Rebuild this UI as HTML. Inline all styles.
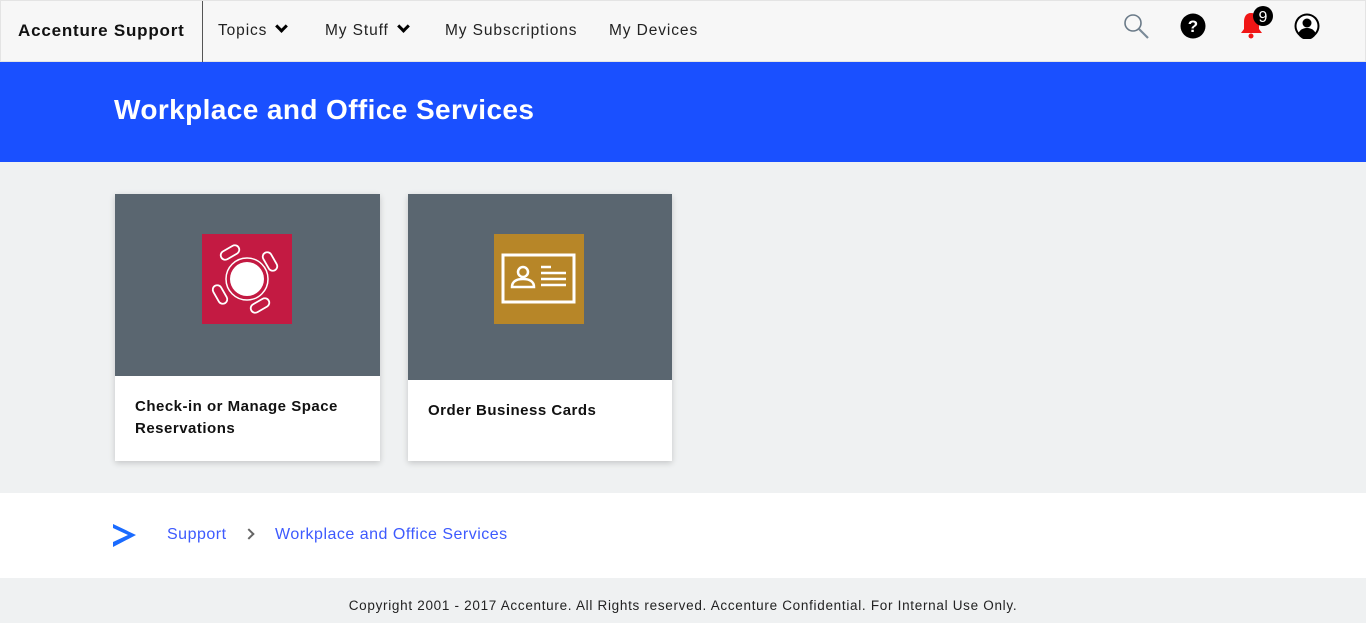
<!DOCTYPE html>
<html><head><meta charset="utf-8"><style>
*{margin:0;padding:0;box-sizing:border-box}
body{width:1366px;height:623px;overflow:hidden;font-family:"Liberation Sans",sans-serif;background:#eff1f2;position:relative}
.hdr{position:absolute;left:0;top:0;width:1366px;height:62px;background:#f7f7f7;border:1px solid #e4e4e4}
.brand{position:absolute;left:17px;top:20px;font-size:17px;font-weight:bold;color:#111;letter-spacing:0.8px}
.sep{position:absolute;left:201px;top:0;width:1px;height:61px;background:#555}
.nav{position:absolute;top:21px;font-size:15.5px;color:#222;letter-spacing:0.9px}
.chev{display:inline-block;width:9px;height:9px;border-right:3.5px solid #000;border-bottom:3.5px solid #000;transform:rotate(45deg);margin-left:10px;position:relative;top:-4px}
.band{position:absolute;left:0;top:62px;width:1366px;height:100px;background:#1a50ff}
.band h1{position:absolute;left:114px;top:32px;font-size:28px;color:#fff;font-weight:bold;letter-spacing:0.4px}
.card{position:absolute;top:194px;background:#fff;box-shadow:0 2px 6px rgba(0,0,0,.18)}
.card .g{background:#5a6670;position:relative}
.card .t{position:absolute;left:20px;font-size:15px;font-weight:bold;color:#111;line-height:22px;letter-spacing:0.5px}
.foot{position:absolute;left:0;top:493px;width:1366px;height:85px;background:#fff}
.bc{position:absolute;top:33px;font-size:16px;color:#3d5afe;letter-spacing:0.5px}
.copy{position:absolute;left:0;top:598px;width:1366px;text-align:center;font-size:13.5px;color:#222;letter-spacing:0.7px}
</style></head><body>
<div class="hdr">
<div class="brand">Accenture Support</div><div class="sep"></div>
<div class="nav" style="left:217px">Topics<span class="chev"></span></div>
<div class="nav" style="left:324px">My Stuff<span class="chev"></span></div>
<div class="nav" style="left:444px">My Subscriptions</div>
<div class="nav" style="left:608px">My Devices</div>
<svg style="position:absolute;left:1121px;top:11px" width="30" height="28"><circle cx="11" cy="11" r="8" fill="none" stroke="#6a7a88" stroke-width="1.6"/><line x1="17" y1="17" x2="26" y2="26" stroke="#7a8a98" stroke-width="2.2"/></svg>
<svg style="position:absolute;left:1179px;top:12px" width="26" height="26"><circle cx="13" cy="13" r="12.5" fill="#000"/><text x="13" y="19" font-size="17" font-weight="bold" fill="#fff" text-anchor="middle" font-family="Liberation Sans">?</text></svg>
<svg style="position:absolute;left:1236px;top:4px" width="40" height="36"><path d="M14 8c-5 0 -7 4-7 9v7l-3 4h21l-3-4v-7c0-5-3-9-8-9z" fill="#f01616"/><circle cx="14" cy="31" r="2.5" fill="#f01616"/><circle cx="26" cy="11" r="10" fill="#000"/><text x="26" y="17" font-size="16" fill="#fff" text-anchor="middle" font-family="Liberation Sans">9</text></svg>
<svg style="position:absolute;left:1293px;top:12px" width="26" height="26"><circle cx="13" cy="13" r="12.5" fill="#000"/><circle cx="13" cy="13" r="10.5" fill="#fff"/><circle cx="13" cy="10" r="4.5" fill="#000"/><path d="M4 21c2-5 6-6 9-6s7 1 9 6a10 10 0 0 1-18 0z" fill="#000"/></svg>
</div>
<div class="band"><h1>Workplace and Office Services</h1></div>
<div class="card" style="left:115px;width:265px;height:267px"><div class="g" style="height:182px">
<svg style="position:absolute;left:87px;top:40px" width="90" height="90"><rect width="90" height="90" fill="#c31a42"/><circle cx="45" cy="45" r="17" fill="#fff"/><circle cx="45" cy="45" r="21" fill="none" stroke="#fff" stroke-width="1.5"/><g fill="none" stroke="#fff" stroke-width="1.8"><rect x="18" y="14" width="20" height="9" rx="4.5" transform="rotate(-30 28 18.5)"/><rect x="58" y="23" width="20" height="9" rx="4.5" transform="rotate(60 68 27.5)"/><rect x="8" y="56" width="20" height="9" rx="4.5" transform="rotate(60 18 60.5)"/><rect x="48" y="67" width="20" height="9" rx="4.5" transform="rotate(-30 58 71.5)"/></g></svg>
</div><div class="t" style="top:202px">Check-in or Manage Space<br>Reservations</div></div>
<div class="card" style="left:408px;width:264px;height:267px"><div class="g" style="height:186px">
<svg style="position:absolute;left:86px;top:40px" width="90" height="90"><rect width="90" height="90" fill="#b78628"/><rect x="9" y="21" width="71" height="47" fill="none" stroke="#fff" stroke-width="3"/><circle cx="29" cy="38" r="5" fill="none" stroke="#fff" stroke-width="2.5"/><path d="M18 53c0-6 5-8 11-8s11 2 11 8z" fill="none" stroke="#fff" stroke-width="2.5"/><g stroke="#fff" stroke-width="2.5"><line x1="47" y1="33" x2="57" y2="33"/><line x1="47" y1="39" x2="72" y2="39"/><line x1="47" y1="45" x2="72" y2="45"/><line x1="47" y1="51" x2="72" y2="51"/></g></svg>
</div><div class="t" style="top:206px">Order Business Cards</div></div>
<div class="foot">
<svg style="position:absolute;left:112px;top:30px" width="26" height="26"><path d="M1 1L24 12L1 24L1 19L16 12L1 5z" fill="#1a6bff"/></svg>
<div class="bc" style="left:167px">Support</div>
<span style="position:absolute;left:245px;top:37px;width:8px;height:8px;border-right:2.5px solid #666;border-top:2.5px solid #666;transform:rotate(45deg)"></span>
<div class="bc" style="left:275px">Workplace and Office Services</div>
</div>
<div class="copy">Copyright 2001 - 2017 Accenture. All Rights reserved. Accenture Confidential. For Internal Use Only.</div>
</body></html>
